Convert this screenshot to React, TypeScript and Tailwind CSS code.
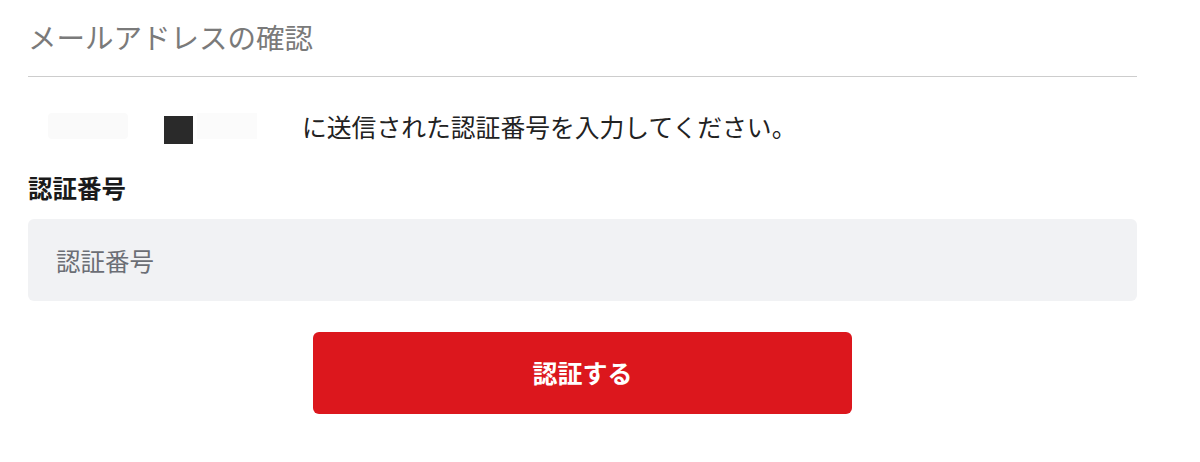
import React from 'react';

const font = { fontFamily: '"Noto Sans CJK JP", "Noto Sans", sans-serif' };

export default function App() {
  return (
    <div className="min-h-[462px] w-[1200px] bg-white" style={font}>
      <div className="ml-[28px] w-[1109px] pt-[19px]">
        <h1 className="text-[28.5px] leading-[36px] text-[#7a7a7a] font-normal">
          メールアドレスの確認
        </h1>
        <div className="mt-[21px] h-px bg-[#cdcdcd]" />

        <div className="mt-[31px] flex items-center">
          {/* redacted address */}
          <div className="flex h-[36px] w-[274px] items-center">
            <div className="ml-[20px] h-[26px] w-[80px] rounded bg-[#fafafa]" />
            <div className="ml-[36px] mt-[8px] h-[28px] w-[29px] bg-[#2a2a2a]" />
            <div className="ml-[4px] h-[26px] w-[60px] bg-[#fbfbfb]" />
          </div>
          <p className="text-[24.8px] leading-[36px] text-[#222]">
            に送信された認証番号を入力してください。
          </p>
        </div>

        <label
          htmlFor="code"
          className="mt-[26px] block text-[24.5px] font-bold leading-[36px] text-[#1a1a1a]"
        >
          認証番号
        </label>
        <input
          id="code"
          type="text"
          placeholder="認証番号"
          className="mt-[13px] block h-[82px] w-full rounded-md bg-[#f1f2f4] px-[28px] text-[24.5px] text-[#222] placeholder:text-[#6b6e75] focus:outline-none"
          style={font}
        />

        <button
          type="button"
          className="mx-auto mt-[31px] flex h-[82px] w-[539px] items-center justify-center rounded-md bg-[#dc171d] text-[25px] font-bold text-white"
          style={font}
        >
          認証する
        </button>
      </div>
    </div>
  );
}
